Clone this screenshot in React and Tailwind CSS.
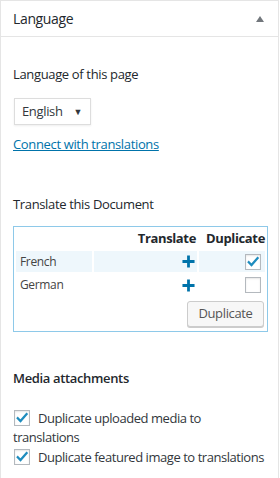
import React from 'react';

const font = { fontFamily: '"Open Sans", "Noto Sans", sans-serif' };

const Check = () => (
    <svg viewBox="0 0 16 16" className="w-[16px] h-[16px]">
        <path d="M3.2 8.2 L6.3 11.4 L13.2 3.6" fill="none" stroke="#1e8cbe" strokeWidth="2.6" strokeLinecap="square" />
    </svg>
);

// Checkbox in WordPress admin style
const Box = ({ checked }) => (
    <span className="inline-flex w-[16px] h-[16px] border border-[#b4b9be] bg-white shadow-[inset_0_1px_2px_rgba(0,0,0,0.1)] items-center justify-center shrink-0">
        {checked && <Check />}
    </span>
);

const Plus = () => (
    <svg viewBox="0 0 14 14" className="w-[13px] h-[13px]">
        <path d="M7 0.5 V13.5 M0.5 7 H13.5" stroke="#0073aa" strokeWidth="3" />
    </svg>
);

const App = () => {
    return (
        <div style={font} className="w-[279px] h-[478px] bg-white border-x border-t border-[#e5e5e5] text-[#23282d] text-[13px] tracking-[-0.35px]">
            {/* Header */}
            <div className="h-[36px] border-b border-[#e5e5e5] flex items-center justify-between pl-[12px] pr-[14px]">
                <span className="text-[14px]">Language</span>
                <svg viewBox="0 0 8 6" className="w-[8px] h-[6px]">
                    <polygon points="4,0 8,6 0,6" fill="#72777c" />
                </svg>
            </div>

            <div className="px-[12px]">
                <p className="mt-[27px] leading-[20px]">Language of this page</p>

                <div className="mt-[14px] ml-[1px] w-[77px] h-[27px] border border-[#ddd] shadow-[0_1px_2px_rgba(0,0,0,0.07)] flex items-center justify-between pl-[7px] pr-[8px]">
                    <span className="text-[#32373c]">English</span>
                    <span className="text-[9px] text-[#32373c]">▼</span>
                </div>

                <a href="#" className="block mt-[9px] leading-[20px] text-[#0073aa] underline">Connect with translations</a>

                <p className="mt-[40px] leading-[20px]">Translate this Document</p>

                {/* Translations box */}
                <div className="mt-[12px] w-[255px] border border-[#8ec9e9] pb-[4px]">
                    <table className="border-separate border-spacing-[2px]">
                        <thead>
                            <tr className="h-[20px]">
                                <th className="w-[76px]"></th>
                                <th className="w-[103px] text-right font-bold pr-[1px]">Translate</th>
                                <th className="w-[66px] text-right font-bold pr-0">Duplicate</th>
                            </tr>
                        </thead>
                        <tbody className="text-[12px] text-[#444]">
                            <tr className="h-[21px] bg-[#eef7fc]">
                                <td className="pl-[4px]">French</td>
                                <td className="pr-[2px]"><div className="flex justify-end"><Plus /></div></td>
                                <td className="pr-[4px]"><div className="flex justify-end"><Box checked /></div></td>
                            </tr>
                            <tr className="h-[22px]">
                                <td className="pl-[4px]">German</td>
                                <td className="pr-[2px]"><div className="flex justify-end"><Plus /></div></td>
                                <td className="pr-[4px]"><div className="flex justify-end"><Box /></div></td>
                            </tr>
                        </tbody>
                    </table>
                    <div className="flex justify-end pr-[3px] mt-[3px]">
                        <button className="h-[26px] w-[77px] border border-[#ccc] rounded-[3px] bg-[#f7f7f7] shadow-[0_1px_0_#ccc] text-[#555] text-[13px]">
                            Duplicate
                        </button>
                    </div>
                </div>

                <p className="mt-[36px] leading-[20px] font-semibold">Media attachments</p>

                <div className="mt-[21px] leading-[19px] text-[#32373c] tracking-[-0.45px]">
                    <label className="block">
                        <span className="inline-flex align-middle mr-[8px] ml-[1px] -mt-[3px]"><Box checked /></span>
                        Duplicate uploaded media to translations
                    </label>
                    <label className="block mt-[1px] -mr-[6px]">
                        <span className="inline-flex align-middle mr-[8px] ml-[1px] -mt-[3px]"><Box checked /></span>
                        Duplicate featured image to translations
                    </label>
                </div>
            </div>
        </div>
    );
};

export default App;
